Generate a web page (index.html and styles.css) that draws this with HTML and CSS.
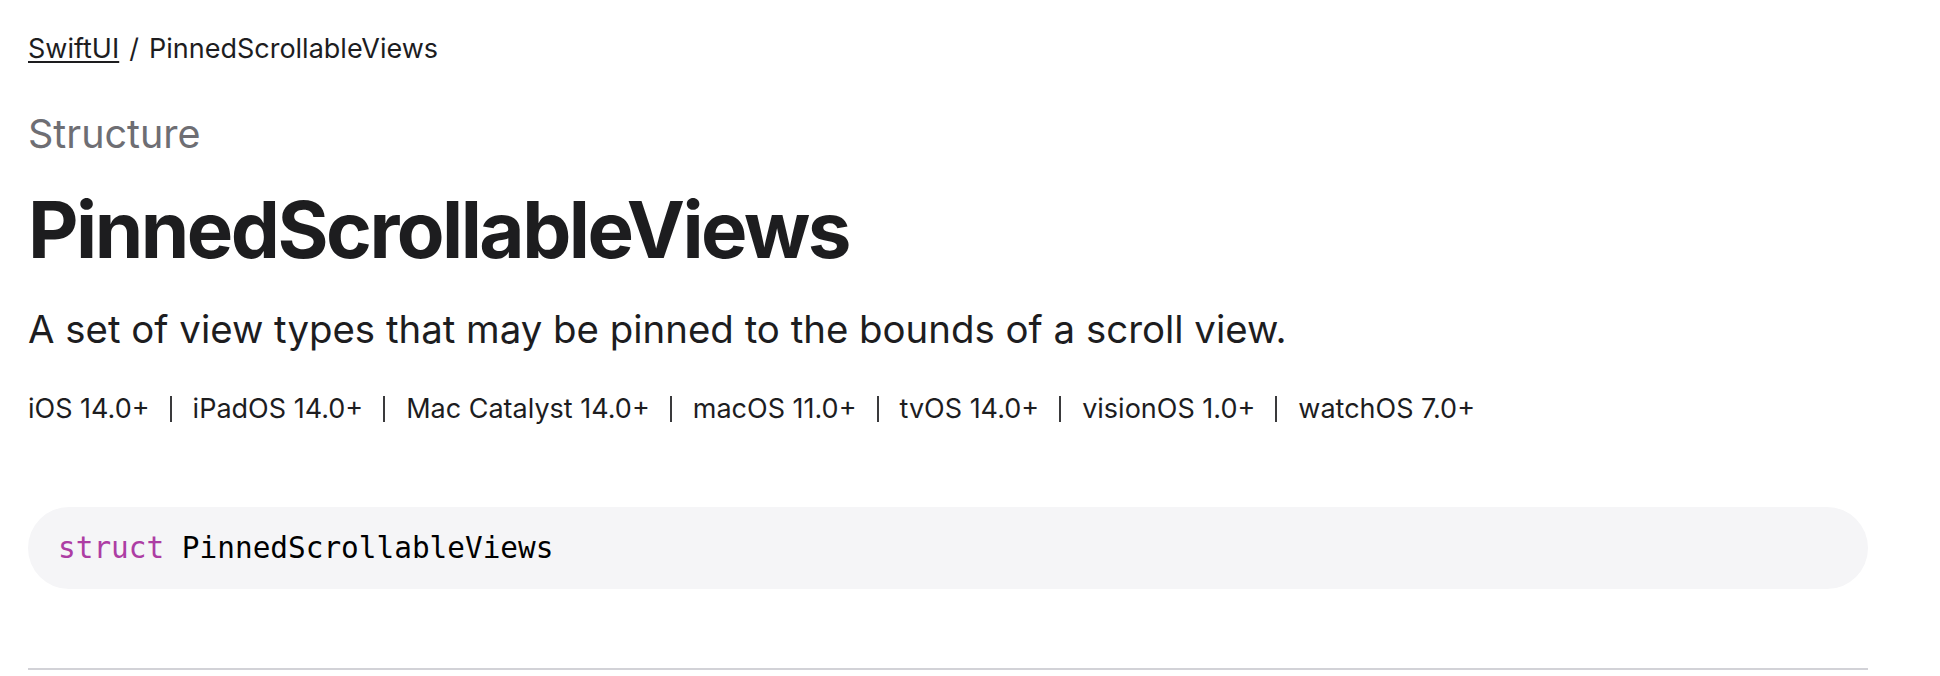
FILE: index.html
```html
<!DOCTYPE html>
<html lang="en">
<head>
<meta charset="utf-8">
<title>PinnedScrollableViews</title>
<link rel="stylesheet" href="styles.css">
</head>
<body>
<main class="page">
  <nav class="breadcrumb">
    <a class="crumb-link" href="#">SwiftUI</a>
    <span class="crumb-sep">/</span>
    <span class="crumb-current">PinnedScrollableViews</span>
  </nav>
  <div class="eyebrow">Structure</div>
  <h1 class="title">PinnedScrollableViews</h1>
  <p class="abstract">A set of view types that may be pinned to the bounds of a scroll view.</p>
  <ul class="platforms">
    <li class="platform">iOS 14.0+</li>
    <li class="platform">iPadOS 14.0+</li>
    <li class="platform">Mac Catalyst 14.0+</li>
    <li class="platform">macOS 11.0+</li>
    <li class="platform">tvOS 14.0+</li>
    <li class="platform">visionOS 1.0+</li>
    <li class="platform">watchOS 7.0+</li>
  </ul>
  <pre class="declaration"><code><span class="kw">struct</span> PinnedScrollableViews</code></pre>
  <hr class="divider">
</main>
</body>
</html>
```

FILE: styles.css
```css
html, body {
  margin: 0;
  padding: 0;
  background: #ffffff;
}

body {
  font-family: Inter, "Noto Sans", "Liberation Sans", sans-serif;
  color: #1d1d1f;
}

.page {
  padding: 0 72px 0 28px;
}

.breadcrumb {
  display: flex;
  align-items: baseline;
  gap: 10px;
  font-size: 27px;
  line-height: 32px;
  padding-top: 33px;
}

.crumb-link {
  color: #1d1d1f;
  text-decoration: underline;
  text-underline-offset: 3px;
  text-decoration-thickness: 2px;
}

.eyebrow {
  margin-top: 45px;
  font-size: 39.5px;
  line-height: 48px;
  color: #6e6e73;
}

.title {
  margin: 28px 0 0;
  font-size: 78px;
  line-height: 88px;
  font-weight: 700;
  letter-spacing: -2.5px;
}

.abstract {
  margin: 31px 0 0;
  font-size: 38.4px;
  line-height: 48px;
}

.platforms {
  list-style: none;
  margin: 40px 0 0;
  padding: 0;
  display: flex;
  align-items: center;
  font-size: 27px;
  line-height: 32px;
}

.platform {
  display: flex;
  align-items: center;
}

.platform + .platform::before {
  content: "";
  display: block;
  width: 2px;
  height: 26px;
  background: #3a3a3c;
  margin: 0 21px 0 20px;
}

.declaration {
  margin: 82px 0 0;
  background: #f5f5f7;
  border-radius: 41px;
  height: 82px;
  box-sizing: border-box;
  padding: 0 30px;
  display: flex;
  align-items: center;
  font-family: "DejaVu Sans Mono", "Liberation Mono", monospace;
  font-size: 29.4px;
  color: #000000;
}

.kw {
  color: #ad3da4;
}

.divider {
  margin: 79px 0 0;
  border: 0;
  height: 2px;
  background: #d2d2d7;
}
```
